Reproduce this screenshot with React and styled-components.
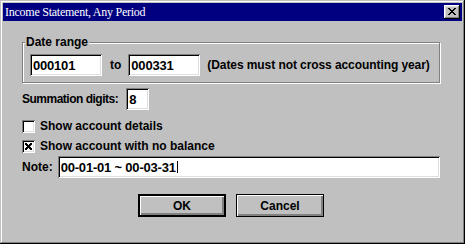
import React from 'react';
import styled, { createGlobalStyle } from 'styled-components';

const Global = createGlobalStyle`
  html, body { margin: 0; padding: 0; background: #c0c0c0; }
  body { width: 465px; height: 244px; overflow: hidden; }
`;

const Window = styled.div`
  box-sizing: border-box;
  width: 465px;
  height: 244px;
  padding: 3px;
  background: #c0c0c0;
  box-shadow: inset -1px -1px 0 #000, inset 1px 1px 0 #c0c0c0,
    inset -2px -2px 0 #808080, inset 2px 2px 0 #fff;
  display: flex;
  flex-direction: column;
  font-family: "Liberation Sans", Arial, sans-serif;
  color: #000;
`;

const TitleBar = styled.div`
  height: 18px;
  flex: none;
  background: #000080;
  display: flex;
  align-items: center;
  justify-content: space-between;
  padding: 0 2px;
`;

const Title = styled.span`
  color: #fff;
  font-family: "Liberation Serif", "Times New Roman", serif;
  font-size: 12px;
  letter-spacing: -0.25px;
  white-space: nowrap;
`;

const CloseButton = styled.div`
  box-sizing: border-box;
  width: 16px;
  height: 14px;
  background: #c0c0c0;
  display: flex;
  align-items: center;
  justify-content: center;
  padding: 0 1px 1px 0;
  box-shadow: inset -1px -1px 0 #000, inset 1px 1px 0 #fff,
    inset -2px -2px 0 #808080, inset 2px 2px 0 #dfdfdf;
`;

const Content = styled.div`
  display: flex;
  flex-direction: column;
  padding: 0 22px 0 19px;
`;

const Group = styled.div`
  position: relative;
  margin-top: 21px;
  border: 1px solid #808080;
  box-shadow: inset 1px 1px 0 #fff, 1px 1px 0 #fff;
  padding: 11px 6px 6px 7px;
  display: flex;
  align-items: center;
`;

const Legend = styled.span`
  position: absolute;
  top: -8px;
  left: 2px;
  padding: 0 1px;
  background: #c0c0c0;
  font-size: 12px;
  font-weight: bold;
  line-height: 14px;
`;

const Label = styled.span`
  font-size: 12px;
  font-weight: bold;
  white-space: nowrap;
  letter-spacing: ${p => p.$ls || '0'};
  margin: ${p => p.$m || '0'};
`;

const Field = styled.div`
  box-sizing: border-box;
  height: 22px;
  width: ${p => (p.$w ? `${p.$w}px` : 'auto')};
  flex: ${p => (p.$grow ? '1' : 'none')};
  margin-left: ${p => p.$ml || 0}px;
  background: #fff;
  padding: 0 2px 0 3px;
  display: flex;
  align-items: center;
  font-size: 13px;
  font-weight: bold;
  letter-spacing: -0.2px;
  white-space: nowrap;
  box-shadow: inset 1px 1px 0 #808080, inset -1px -1px 0 #fff,
    inset 2px 2px 0 #000, inset -2px -2px 0 #dfdfdf;
`;

const Caret = styled.span`
  display: inline-block;
  width: 1px;
  height: 12px;
  margin-left: 1px;
  background: #000;
`;

const Row = styled.div`
  display: flex;
  align-items: center;
  height: ${p => p.$h || 22}px;
  margin-top: ${p => p.$mt || 0}px;
`;

const CheckBox = styled.div`
  box-sizing: border-box;
  width: 13px;
  height: 13px;
  flex: none;
  background: #fff;
  display: flex;
  align-items: center;
  justify-content: center;
  margin-right: 5px;
  box-shadow: inset 1px 1px 0 #808080, inset -1px -1px 0 #fff,
    inset 2px 2px 0 #000, inset -2px -2px 0 #dfdfdf;
`;

const ButtonRow = styled.div`
  display: flex;
  justify-content: center;
  gap: 10px;
  margin-top: 16px;
`;

const Button = styled.div`
  box-sizing: border-box;
  width: 88px;
  height: 23px;
  display: flex;
  align-items: center;
  justify-content: center;
  background: #c0c0c0;
  font-size: 12px;
  font-weight: bold;
  border: ${p => (p.$default ? '2px' : '1px')} solid #000;
  box-shadow: inset 1px 1px 0 #fff, inset -2px -2px 0 #808080;
`;

const pixelPath = rows =>
  rows
    .map((r, y) =>
      r
        .split('')
        .map((c, x) => (c === 'X' ? `M${x} ${y}h1v1h-1z` : ''))
        .join('')
    )
    .join('');

const CloseGlyph = () => (
  <svg width="8" height="7" viewBox="0 0 8 7" shapeRendering="crispEdges">
    <path
      fill="#000"
      d={pixelPath([
        'XX....XX',
        '.XX..XX.',
        '..XXXX..',
        '...XX...',
        '..XXXX..',
        '.XX..XX.',
        'XX....XX',
      ])}
    />
  </svg>
);

const CheckGlyph = () => (
  <svg width="7" height="7" viewBox="0 0 7 7" shapeRendering="crispEdges">
    <path
      fill="#000"
      d={pixelPath([
        'XX...XX',
        'XXX.XXX',
        '.XXXXX.',
        '..XXX..',
        '.XXXXX.',
        'XXX.XXX',
        'XX...XX',
      ])}
    />
  </svg>
);

export default function App() {
  return (
    <>
      <Global />
      <Window>
        <TitleBar>
          <Title>Income Statement, Any Period</Title>
          <CloseButton>
            <CloseGlyph />
          </CloseButton>
        </TitleBar>
        <Content>
          <Group>
            <Legend>Date range</Legend>
            <Field $w={72}>000101</Field>
            <Label $m="0 7px 0 8px">to</Label>
            <Field $w={72}>000331</Field>
            <Label $m="0 0 0 7px" $ls="-0.08px">
              (Dates must not cross accounting year)
            </Label>
          </Group>
          <Row $mt={5}>
            <Label $ls="-0.5px">Summation digits:</Label>
            <Field $w={23} $ml={8}>8</Field>
          </Row>
          <Row $h={20} $mt={6}>
            <CheckBox />
            <Label>Show account details</Label>
          </Row>
          <Row $h={20}>
            <CheckBox>
              <CheckGlyph />
            </CheckBox>
            <Label>Show account with no balance</Label>
          </Row>
          <Row>
            <Label $m="0 5px 0 0">Note:</Label>
            <Field $grow>
              00-01-01 ~ 00-03-31
              <Caret />
            </Field>
          </Row>
          <ButtonRow>
            <Button $default>OK</Button>
            <Button>Cancel</Button>
          </ButtonRow>
        </Content>
      </Window>
    </>
  );
}
